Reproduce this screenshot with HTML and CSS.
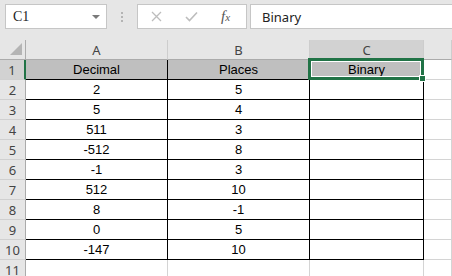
FILE: index.html
```html
<!DOCTYPE html>
<html lang="en">
<head>
    <meta charset="UTF-8">
    <link rel="stylesheet" href="styles.css">
    <title>Binary</title>
</head>
<body>
    <div class="formula-bar">
        <div class="name-box">
            <span>C1</span>
            <span class="drop"></span>
        </div>
        <div class="grip"><i></i><i></i><i></i></div>
        <div class="fx-buttons">
            <svg class="icon" width="11" height="11" viewBox="0 0 11 11"><path d="M1 1 L10 10 M10 1 L1 10" stroke="#bdbdbd" stroke-width="1.3" fill="none"/></svg>
            <svg class="icon" width="13" height="11" viewBox="0 0 13 11"><path d="M1 6 L4.5 9.5 L12 1.5" stroke="#bdbdbd" stroke-width="1.6" fill="none"/></svg>
            <span class="fx">f<small>x</small></span>
        </div>
        <div class="formula-input">Binary</div>
    </div>

    <div class="sheet">
        <div class="corner">
            <svg width="13" height="13" viewBox="0 0 13 13"><path d="M0 12 L12 12 L12 0 Z" fill="#b4b4b4"/></svg>
        </div>
        <div class="ch">A</div>
        <div class="ch">B</div>
        <div class="ch sel">C</div>
        <div class="ch"></div>

        <div class="rh sel">1</div>
        <div class="d title">Decimal</div>
        <div class="d title">Places</div>
        <div class="d title active">Binary<span class="select-box"><span class="handle"></span></span></div>
        <div class="c"></div>

        <div class="rh">2</div>
        <div class="d">2</div>
        <div class="d">5</div>
        <div class="d"></div>
        <div class="c"></div>

        <div class="rh">3</div>
        <div class="d">5</div>
        <div class="d">4</div>
        <div class="d"></div>
        <div class="c"></div>

        <div class="rh">4</div>
        <div class="d">511</div>
        <div class="d">3</div>
        <div class="d"></div>
        <div class="c"></div>

        <div class="rh">5</div>
        <div class="d">-512</div>
        <div class="d">8</div>
        <div class="d"></div>
        <div class="c"></div>

        <div class="rh">6</div>
        <div class="d">-1</div>
        <div class="d">3</div>
        <div class="d"></div>
        <div class="c"></div>

        <div class="rh">7</div>
        <div class="d">512</div>
        <div class="d">10</div>
        <div class="d"></div>
        <div class="c"></div>

        <div class="rh">8</div>
        <div class="d">8</div>
        <div class="d">-1</div>
        <div class="d"></div>
        <div class="c"></div>

        <div class="rh">9</div>
        <div class="d">0</div>
        <div class="d">5</div>
        <div class="d"></div>
        <div class="c"></div>

        <div class="rh">10</div>
        <div class="d">-147</div>
        <div class="d">10</div>
        <div class="d"></div>
        <div class="c"></div>

        <div class="rh">11</div>
        <div class="c"></div>
        <div class="c"></div>
        <div class="c"></div>
        <div class="c"></div>
    </div>
</body>
</html>
```

FILE: styles.css
```css
html, body {
    margin: 0;
    padding: 0;
    width: 100%;
    height: 100%;
    overflow: hidden;
    background: #e6e6e6;
    font-family: "Liberation Sans", Arial, sans-serif;
}

.formula-bar {
    display: flex;
    align-items: center;
    height: 40px;
    box-sizing: border-box;
    padding: 4px 0 11px 5px;
}

.name-box {
    display: flex;
    align-items: center;
    justify-content: space-between;
    width: 102px;
    height: 25px;
    box-sizing: border-box;
    padding: 0 6px 0 7px;
    background: #fff;
    border: 1px solid #c6c6c6;
    font-family: "Liberation Serif", serif;
    font-size: 14px;
    color: #222;
}

.drop {
    width: 0;
    height: 0;
    border-left: 4px solid transparent;
    border-right: 4px solid transparent;
    border-top: 4px solid #7a7a7a;
    margin-top: 1px;
}

.grip {
    display: flex;
    flex-direction: column;
    align-items: center;
    gap: 2px;
    width: 30px;
}

.grip i {
    width: 2px;
    height: 2px;
    background: #b4b4b4;
}

.fx-buttons {
    display: flex;
    align-items: center;
    width: 110px;
    height: 25px;
    box-sizing: border-box;
    padding: 0 0 0 13px;
    gap: 23px;
    background: #fff;
    border: 1px solid #c6c6c6;
}

.fx {
    font-family: "Liberation Serif", serif;
    font-style: italic;
    font-size: 15px;
    color: #555;
    margin-left: 0;
}

.fx small {
    font-size: 11px;
}

.formula-input {
    flex: 1;
    display: flex;
    align-items: center;
    height: 25px;
    box-sizing: border-box;
    margin-left: 3px;
    padding-left: 11px;
    background: #fff;
    border: 1px solid #c6c6c6;
    border-right: 0;
    font-family: "Noto Sans", sans-serif;
    font-size: 13px;
    color: #222;
}

.sheet {
    display: grid;
    grid-template-columns: 26px 142px 142px 114px 1fr;
    grid-auto-rows: 20px;
    background: #fff;
}

.sheet > div {
    box-sizing: border-box;
    display: flex;
    align-items: center;
    justify-content: center;
    font-size: 13px;
    color: #000;
}

.corner {
    background: #e6e6e6;
    border-right: 1px solid #ababab;
    border-bottom: 1px solid #ababab;
    justify-content: flex-end !important;
    align-items: flex-end !important;
    padding: 0 2px 3px 0;
}

.ch {
    background: #e6e6e6;
    border-right: 1px solid #cdcdcd;
    border-bottom: 1px solid #ababab;
    font-family: "Noto Sans", sans-serif;
    font-size: 13px !important;
    color: #444 !important;
}

.rh {
    background: #e6e6e6;
    border-right: 1px solid #ababab;
    border-bottom: 1px solid #d0d0d0;
    font-family: "Noto Sans", sans-serif;
    font-size: 13px !important;
    color: #444 !important;
}

.ch.sel,
.rh.sel {
    background: #d2d2d2;
}

.rh.sel {
    border-right: 2px solid #217346;
}

.c {
    border-right: 1px solid #d4d4d4;
    border-bottom: 1px solid #d4d4d4;
}

.d {
    border-right: 1px solid #000;
    border-bottom: 1px solid #000;
}

.title {
    background: #bfbfbf;
}

.active {
    position: relative;
}

.select-box {
    position: absolute;
    left: -2px;
    top: -2px;
    right: -1px;
    bottom: -1px;
    border: 3px solid #217346;
    box-shadow: inset 0 0 0 1px #fff;
}

.handle {
    position: absolute;
    right: -5px;
    bottom: -5px;
    width: 5px;
    height: 5px;
    background: #217346;
    border: 1px solid #fff;
}
```
